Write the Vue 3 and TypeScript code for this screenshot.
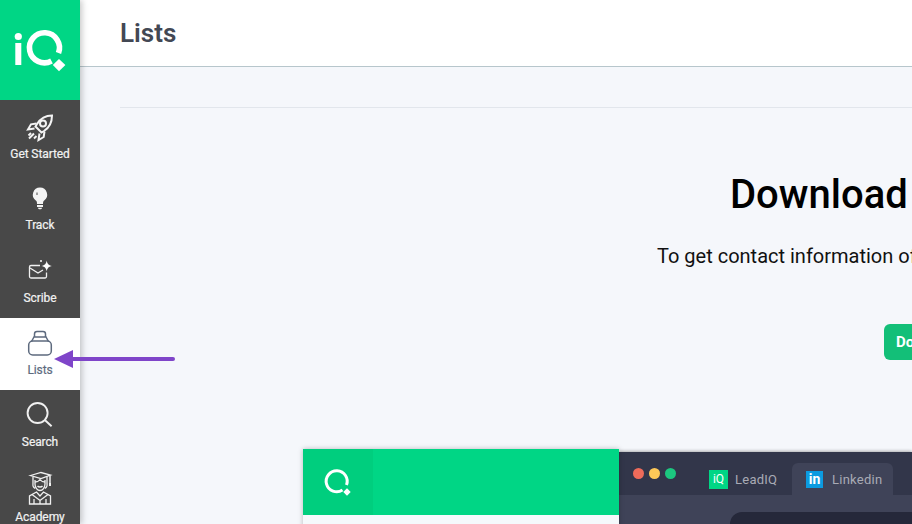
<script setup lang="ts">
const dots = ['#ee6b5a', '#fdc858', '#1cc77f']
</script>

<template>
  <div class="app">
    <aside class="sidebar">
      <div class="brand">
        <svg width="80" height="100" viewBox="0 0 80 100">
          <circle cx="18.3" cy="36.5" r="3.6" fill="#fff" />
          <rect x="15.3" y="43" width="6" height="22" fill="#fff" />
          <path d="M51.500 61A15 15 0 1 1 58.500 53" fill="none" stroke="#fff" stroke-width="5.600" />
          <path d="M59 59l6.400 6-6.400 6.200-6.200-6.200z" fill="#fff" />
        </svg>
      </div>

      <a class="item get-started">
        <svg class="icon" viewBox="0 0 40 36" fill="none" stroke="#f4f4f4" stroke-width="2">
          <path d="M32 7.500c-6.500 0-11.500 3-15 8.500l-1.500 2.500 6 6 2.500-1.500c5.500-3.500 8-8.500 8-15.500z" />
          <circle cx="23" cy="15.500" r="3" />
          <path d="M16.500 15.500l-5.500.8-3 5.200 6.500-1M24.500 23.500l-.8 5.500-5.200 3 1-6.500" />
          <path d="M14 25.500l-5 5M11 25l-2.500 2.500M16.500 28l-2.500 2.500" />
        </svg>
        <span class="label">Get Started</span>
      </a>

      <a class="item">
        <svg class="icon" viewBox="0 0 40 36">
          <path d="M20 8.500a7.200 7.200 0 0 0-4.200 13c1 .8 1.200 1.500 1.200 3.500h6c0-2 .3-2.700 1.200-3.500A7.200 7.200 0 0 0 20 8.500z" fill="#f4f4f4" />
          <path d="M17 26h6v2h-6zM18 28.700h4c0 1-1 1.500-2 1.500s-2-.5-2-1.500z" fill="#f4f4f4" />
          <path d="M17 13.500v2.500" stroke="#484848" stroke-width="1" />
        </svg>
        <span class="label">Track</span>
      </a>

      <a class="item scribe">
        <svg class="icon" viewBox="0 0 40 36" fill="none" stroke="#f0f0f0" stroke-width="1.300">
          <path d="M20 13.500h-9a1.500 1.500 0 0 0-1.500 1.500v9.500a1.500 1.500 0 0 0 1.500 1.500h14a1.500 1.500 0 0 0 1.500-1.500v-4" />
          <path d="M10 16l8 5 5-3" />
          <path d="M26.700 8.500c.6 3.500 1.800 4.800 5.300 5.500-3.500.7-4.700 2-5.300 5.500-.6-3.500-1.800-4.800-5.300-5.500 3.500-.7 4.700-2 5.300-5.500z" fill="#fff" stroke="none" />
          <circle cx="21" cy="9" r="1" fill="#fff" stroke="none" />
        </svg>
        <span class="label">Scribe</span>
      </a>

      <a class="item active">
        <svg class="icon" viewBox="0 0 40 36" fill="none" stroke="#5d6a7e" stroke-width="1.500">
          <rect x="8.700" y="17" width="22.600" height="14" rx="4" />
          <path d="M11.500 17.500l2.500-4.500h12l2.500 4.500" />
          <path d="M14.500 13v-3a2.500 2.500 0 0 1 2.500-2.500h6a2.500 2.500 0 0 1 2.500 2.500v3" />
        </svg>
        <span class="label">Lists</span>
      </a>

      <a class="item">
        <svg class="icon" viewBox="0 0 40 36" fill="none" stroke="#f0f0f0" stroke-width="1.900">
          <circle cx="17.600" cy="17" r="10" />
          <path d="M24.800 24l6.800 6.300" />
        </svg>
        <span class="label">Search</span>
      </a>

      <a class="item academy">
        <svg class="icon" viewBox="0 0 40 36" fill="none" stroke="#f0f0f0" stroke-width="1.300">
          <path d="M10.500 4.500L21 1.500l9.500 2.500-9.500 3.500z" />
          <path d="M30 4.500v8" stroke-width="1.500" />
          <rect x="29" y="12" width="2" height="3" fill="#f0f0f0" stroke="none" />
          <path d="M13 6v6c0 1.500-.5 3 .5 4l1.500 1.500M27 6v6c0 1.500.5 3-.5 4L25 17.500" />
          <path d="M15 9v4c0 3.500 2.300 6.500 5 6.500s5-3 5-6.500V9" />
          <path d="M15 11c3 0 4-1 5-2.500 1 1.500 2 2.500 5 2.500" />
          <path d="M17.500 15c1 1.300 4 1.300 5 0" />
          <path d="M9.500 33v-8l7-4 3.500 4 3.500-4 7 4v8z" />
          <path d="M12 23.500l8 6 8-6M20 30v3M14 33v-5M26 33v-5" />
        </svg>
        <span class="label">Academy</span>
      </a>
    </aside>

    <main class="main">
      <header class="topbar">
        <h1 class="title">Lists</h1>
      </header>

      <section class="content">
        <hr class="rule" />
        <h2 class="heading">Download</h2>
        <p class="lead">To get contact information of</p>
        <button class="cta" type="button">Download</button>

        <div class="mock">
          <div class="mock-app">
            <div class="mock-bar">
              <div class="mock-logo">
                <svg width="70" height="66" viewBox="0 0 70 66">
                  <path d="M39.500 41A10.500 10.500 0 1 1 43.500 36" fill="none" stroke="#fff" stroke-width="3" />
                  <path d="M44 39.300l3.700 3.700-3.700 3.700-3.700-3.700z" fill="#fff" />
                </svg>
              </div>
            </div>
          </div>
          <div class="browser">
            <div class="tabs">
              <span v-for="c in dots" :key="c" class="dot" :style="{ background: c }" />
              <div class="tab first">
                <span class="fav fav-iq">iQ</span>
                <span>LeadIQ</span>
              </div>
              <div class="tab current">
                <span class="fav fav-in">in</span>
                <span>Linkedin</span>
              </div>
            </div>
            <div class="page">
              <div class="inner" />
            </div>
          </div>
        </div>
      </section>
    </main>

    <div class="arrow">
      <span class="arrow-head" />
      <span class="arrow-line" />
    </div>
  </div>
</template>

<style>
html,
body {
  margin: 0;
  overflow: hidden;
}
</style>

<style scoped>
.app {
  position: relative;
  display: flex;
  width: 912px;
  height: 524px;
  overflow: hidden;
  background: #f5f7fb;
  font-family: Roboto, "Liberation Sans", sans-serif;
}

.sidebar {
  position: relative;
  z-index: 2;
  flex: 0 0 80px;
  width: 80px;
  background: #484848;
  box-shadow: 2px 0 6px rgba(0, 0, 0, 0.22);
}

.brand {
  height: 100px;
  background: #00d685;
}

.brand svg,
.icon {
  display: block;
}

.item {
  display: flex;
  flex-direction: column;
  align-items: center;
  box-sizing: border-box;
  height: 72px;
  padding-top: 6px;
  color: #f2f2f2;
}

.item.get-started {
  height: 73px;
  padding-top: 8px;
}

.item.scribe {
  height: 73px;
  padding-top: 7px;
}

.item.academy {
  padding-top: 9px;
}

.item.active {
  background: #fff;
  color: #5d6a7e;
}

.icon {
  width: 40px;
  height: 36px;
  flex: none;
}

.label {
  margin-top: 3px;
  font-size: 12px;
  letter-spacing: -0.1px;
  -webkit-text-stroke: 0.2px currentColor;
  line-height: 14px;
  white-space: nowrap;
}

.main {
  flex: 1;
  min-width: 0;
}

.topbar {
  box-sizing: border-box;
  height: 67px;
  padding: 18px 40px 0;
  background: #fff;
  border-bottom: 1px solid #b7c6cc;
}

.title {
  margin: 0;
  font-size: 26px;
  font-weight: 600;
  line-height: 31px;
  color: #434854;
}

.content {
  padding: 40px 0 0 40px;
}

.rule {
  height: 1px;
  margin: 0;
  border: 0;
  background: #e2e6ec;
}

.heading {
  margin: 63px 0 0 610px;
  font-size: 40px;
  font-weight: 500;
  line-height: 47px;
  color: #000;
  white-space: nowrap;
}

.lead {
  margin: 26px 0 0 537px;
  font-size: 20px;
  line-height: 24px;
  color: #111;
  white-space: nowrap;
}

.cta {
  display: block;
  width: 120px;
  height: 36px;
  margin: 56px 0 0 764px;
  padding: 0 12px;
  border: 0;
  border-radius: 6px;
  background: #13bf78;
  color: #fff;
  font-family: inherit;
  font-size: 15px;
  font-weight: 700;
  text-align: left;
}

.mock {
  display: flex;
  align-items: flex-start;
  margin: 89px 0 0 183px;
}

.mock-app {
  position: relative;
  z-index: 1;
  flex: 0 0 316px;
  height: 90px;
  background: #f5f9fc;
  box-shadow: 0 0 5px rgba(0, 0, 0, 0.25);
}

.mock-bar {
  height: 66px;
  background: #00d685;
}

.mock-logo {
  width: 70px;
  height: 66px;
  background: #00ce7e;
}

.mock-logo svg {
  display: block;
}

.browser {
  flex: 0 0 293px;
  margin-top: 3px;
  box-shadow: 0 -1px 3px rgba(0, 0, 0, 0.3);
}

.tabs {
  display: flex;
  align-items: center;
  height: 43px;
  padding-left: 14px;
  background: #32364a;
}

.dot {
  flex: none;
  width: 11px;
  height: 11px;
  margin-right: 5px;
  border-radius: 50%;
}

.tab {
  display: flex;
  align-items: center;
  height: 32px;
  margin-top: 11px;
  font-size: 13px;
  letter-spacing: 0.25px;
  color: #a9abb5;
}

.tab.first {
  width: 83px;
  margin-left: 28px;
  gap: 7px;
}

.tab.current {
  box-sizing: border-box;
  width: 101px;
  padding-left: 14px;
  gap: 9px;
  background: #3f4358;
  border-radius: 6px 6px 0 0;
}

.fav {
  display: flex;
  align-items: center;
  justify-content: center;
  flex: none;
  color: #fff;
  letter-spacing: 0;
}

.fav-iq {
  width: 19px;
  height: 19px;
  background: #00d685;
  font-size: 12px;
}

.fav-in {
  width: 17px;
  height: 17px;
  background: #0b9be0;
  font-size: 14px;
  font-weight: 700;
}

.page {
  height: 40px;
  padding: 17px 0 0 111px;
  background: #3f4358;
}

.inner {
  height: 40px;
  background: #25283a;
  border-radius: 12px 0 0 0;
}

.arrow {
  position: absolute;
  z-index: 3;
  left: 54px;
  top: 350px;
  display: flex;
  align-items: center;
  width: 121px;
  height: 18px;
}

.arrow-head {
  flex: none;
  width: 0;
  height: 0;
  border-top: 9px solid transparent;
  border-bottom: 9px solid transparent;
  border-right: 19px solid #7f45c9;
}

.arrow-line {
  flex: 1;
  height: 4px;
  background: #7f45c9;
  border-radius: 0 2px 2px 0;
}
</style>
